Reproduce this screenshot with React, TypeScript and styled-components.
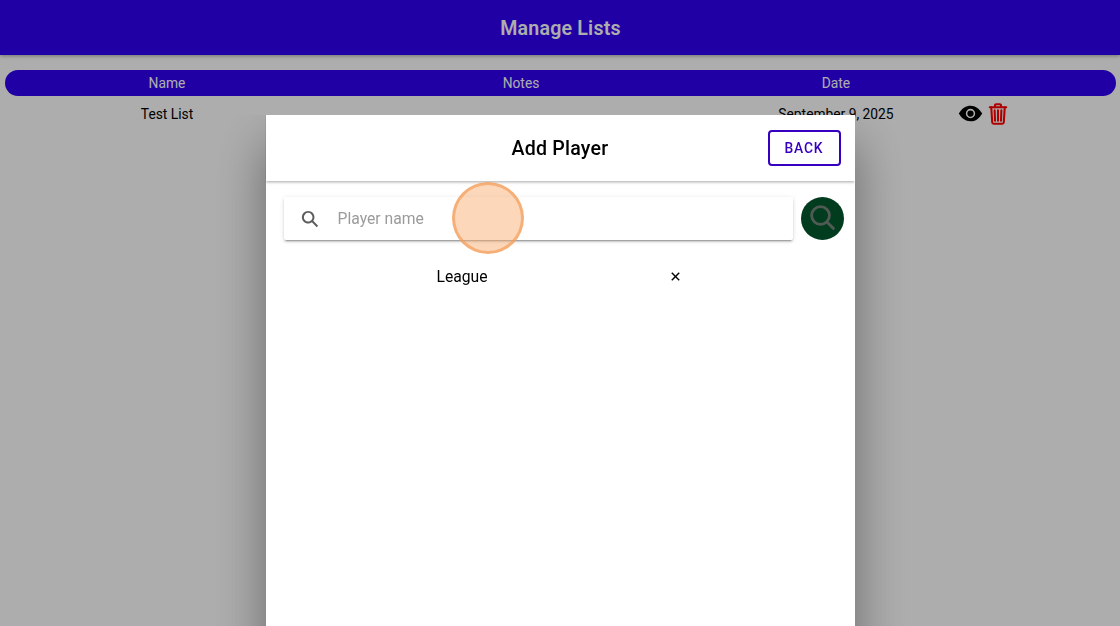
import React from "react";
import styled, { createGlobalStyle } from "styled-components";
import {
  IoCloseSharp,
  IoEyeSharp,
  IoSearchOutline,
  IoSearchSharp,
  IoTrashOutline,
} from "react-icons/io5";

const lists = [{ name: "Test List", notes: "", date: "September 9, 2025" }];

export default function App() {
  return (
    <>
      <GlobalStyle />
      <Page>
        <Header>Manage Lists</Header>
        <ListHeader>
          <span>Name</span>
          <span>Notes</span>
          <span>Date</span>
        </ListHeader>
        {lists.map((list) => (
          <ListRow key={list.name}>
            <span>{list.name}</span>
            <span>{list.notes}</span>
            <span>{list.date}</span>
            <RowActions>
              <IoEyeSharp size={25} color="#000" />
              <TrashIcon size={24} color="#ff0000" />
            </RowActions>
          </ListRow>
        ))}
      </Page>
      <Backdrop>
        <Modal>
          <ModalHeader>
            <ModalTitle>Add Player</ModalTitle>
            <BackButton>BACK</BackButton>
          </ModalHeader>
          <SearchRow>
            <SearchBar>
              <IoSearchSharp size={20} color="#5e5e5e" />
              <SearchInput placeholder="Player name" />
            </SearchBar>
            <SearchButton>
              <IoSearchOutline size={29} />
            </SearchButton>
          </SearchRow>
          <FilterRow>
            <span>League</span>
            <IoCloseSharp size={15} />
          </FilterRow>
        </Modal>
      </Backdrop>
      <TapMarker />
    </>
  );
}

const GlobalStyle = createGlobalStyle`
  * {
    box-sizing: border-box;
  }
  body {
    margin: 0;
    overflow: hidden;
    background: #fff;
    font-family: Roboto, "Liberation Sans", sans-serif;
  }
`;

const Page = styled.div`
  height: 100vh;
`;

const Header = styled.header`
  display: flex;
  align-items: center;
  justify-content: center;
  height: 55px;
  padding: 1px 0 0 1px;
  background: #3000f2;
  color: #fff;
  font-size: 19.6px;
  font-weight: 600;
  letter-spacing: 0.2px;
  box-shadow: 0 1px 4px rgba(0, 0, 0, 0.35);
`;

const ListHeader = styled.div`
  display: grid;
  grid-template-columns: 324px 384px 246px 1fr;
  align-items: center;
  height: 26px;
  margin: 15px 4px 0 5px;
  border-radius: 13px;
  background: #3000f2;
  color: #fff;
  font-size: 13.8px;
  text-align: center;
`;

const ListRow = styled(ListHeader)`
  height: 35px;
  margin-top: 0;
  border-radius: 0;
  background: none;
  color: #000;
`;

const RowActions = styled.div`
  display: flex;
  align-items: center;
  gap: 3px;
  margin-left: -1px;
`;

const TrashIcon = styled(IoTrashOutline)`
  path {
    stroke-width: 44px;
  }
`;

const Backdrop = styled.div`
  position: fixed;
  inset: 0;
  display: flex;
  justify-content: center;
  padding-top: 115px;
  background: rgba(0, 0, 0, 0.32);
`;

const Modal = styled.div`
  width: 589px;
  height: 589px;
  flex-shrink: 0;
  background: #fff;
  box-shadow: 0 28px 48px rgba(0, 0, 0, 0.4);
  clip-path: inset(0 -120px -120px -120px);
`;

const ModalHeader = styled.div`
  display: grid;
  grid-template-columns: 1fr auto 1fr;
  align-items: center;
  height: 66px;
  padding: 0 14px;
  box-shadow: 0 1px 3px rgba(0, 0, 0, 0.35);
  clip-path: inset(0 0 -10px 0);
`;

const ModalTitle = styled.h1`
  grid-column: 2;
  margin: 0;
  font-size: 19.6px;
  font-weight: 500;
  letter-spacing: 0.2px;
`;

const BackButton = styled.button`
  justify-self: end;
  width: 73px;
  height: 36px;
  padding: 0;
  border: 2px solid #3700c0;
  border-radius: 4px;
  background: none;
  color: #3700c0;
  font: 500 13.8px Roboto, sans-serif;
  letter-spacing: 0.84px;
`;

const SearchRow = styled.div`
  display: flex;
  align-items: center;
  gap: 8px;
  padding: 16px 11px 0 18px;
`;

const SearchBar = styled.div`
  display: flex;
  flex: 1;
  align-items: center;
  gap: 18px;
  height: 43px;
  padding: 0 16px;
  border-radius: 2px;
  box-shadow: 0 2px 2px rgba(0, 0, 0, 0.14), 0 3px 1px -2px rgba(0, 0, 0, 0.2),
    0 1px 5px rgba(0, 0, 0, 0.12);
`;

const SearchInput = styled.input`
  flex: 1;
  padding: 0;
  border: 0;
  outline: 0;
  background: none;
  font: 400 15.7px Roboto, sans-serif;

  &::placeholder {
    color: #9b9b9b;
  }
`;

const SearchButton = styled.button`
  display: flex;
  align-items: center;
  justify-content: center;
  width: 43px;
  height: 43px;
  padding: 0 0 2px;
  border: 0;
  border-radius: 50%;
  background: #003c1d;
  color: #505a54;

  path {
    stroke-width: 50px;
  }
`;

const FilterRow = styled.div`
  display: grid;
  grid-template-columns: 393px 1fr;
  align-items: center;
  height: 73px;
  font-size: 15.7px;
  text-align: center;

  svg {
    margin-left: 9px;
  }
`;

/* touch indicator drawn above everything else */
const TapMarker = styled.div`
  position: absolute;
  top: 182px;
  left: 452px;
  width: 72px;
  height: 72px;
  border: 3px solid rgba(242, 153, 84, 0.65);
  border-radius: 50%;
  background: rgba(249, 168, 105, 0.46);
`;
